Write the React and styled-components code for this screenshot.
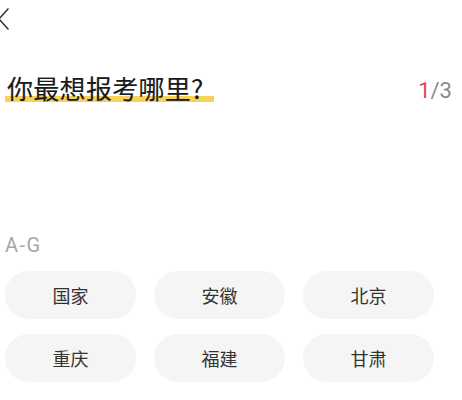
import React from 'react';
import styled, { createGlobalStyle } from 'styled-components';

const Global = createGlobalStyle`
  body {
    margin: 0;
    background: #fff;
    font-family: "Noto Sans CJK SC", "Noto Sans", sans-serif;
  }
`;

const Page = styled.div`
  width: 462px;
  height: 400px;
  overflow: hidden;
  background: #fff;
  display: flex;
  flex-direction: column;
`;

const TopBar = styled.div`
  height: 38px;
  display: flex;
  align-items: center;
`;

const Back = styled.svg`
  width: 12px;
  height: 24px;
  margin-left: -2px;
`;

const TitleRow = styled.div`
  margin-top: 32px;
  display: flex;
  align-items: flex-start;
  justify-content: space-between;
  padding: 0 10px 0 5px;
`;

const Title = styled.h1`
  margin: 0;
  font-size: 26px;
  font-weight: 400;
  -webkit-text-stroke: 0.15px #1a1a1a;
  color: #1a1a1a;
  line-height: 36px;
  padding: 0 10px 0 2px;
  letter-spacing: 0.3px;
  background: linear-gradient(to bottom, transparent 72%, #f6d25a 72%, #f6d25a 90%, transparent 90%);
`;

const Progress = styled.div`
  font-family: "Roboto", "Noto Sans", sans-serif;
  font-size: 22px;
  line-height: 34px;
  color: #8a8a8a;
  margin-top: 4px;
  span {
    color: #d64a55;
  }
`;

const Group = styled.div`
  margin-top: 124px;
  padding-left: 5px;
`;

const GroupLabel = styled.div`
  font-family: "Roboto", "Noto Sans", sans-serif;
  font-size: 20px;
  font-weight: 400;
  color: #a6a6a6;
  line-height: 26px;
  letter-spacing: 1.5px;
`;

const Grid = styled.div`
  margin-top: 13px;
  display: grid;
  grid-template-columns: repeat(3, 131px);
  column-gap: 18px;
  row-gap: 15px;
`;

const Chip = styled.div`
  height: 48px;
  border-radius: 24px;
  background: #f5f5f5;
  display: flex;
  align-items: center;
  justify-content: center;
  font-size: 18px;
  color: #333;
`;

const places = ['国家', '安徽', '北京', '重庆', '福建', '甘肃'];

export default function App() {
  return (
    <Page>
      <Global />
      <TopBar>
        <Back viewBox="0 0 12 24">
          <path d="M10 2 L1 12 L10 22" fill="none" stroke="#333" strokeWidth="1.6" strokeLinecap="round" strokeLinejoin="round" />
        </Back>
      </TopBar>
      <TitleRow>
        <Title>你最想报考哪里?</Title>
        <Progress><span>1</span>/3</Progress>
      </TitleRow>
      <Group>
        <GroupLabel>A-G</GroupLabel>
        <Grid>
          {places.map((p) => (
            <Chip key={p}>{p}</Chip>
          ))}
        </Grid>
      </Group>
    </Page>
  );
}
